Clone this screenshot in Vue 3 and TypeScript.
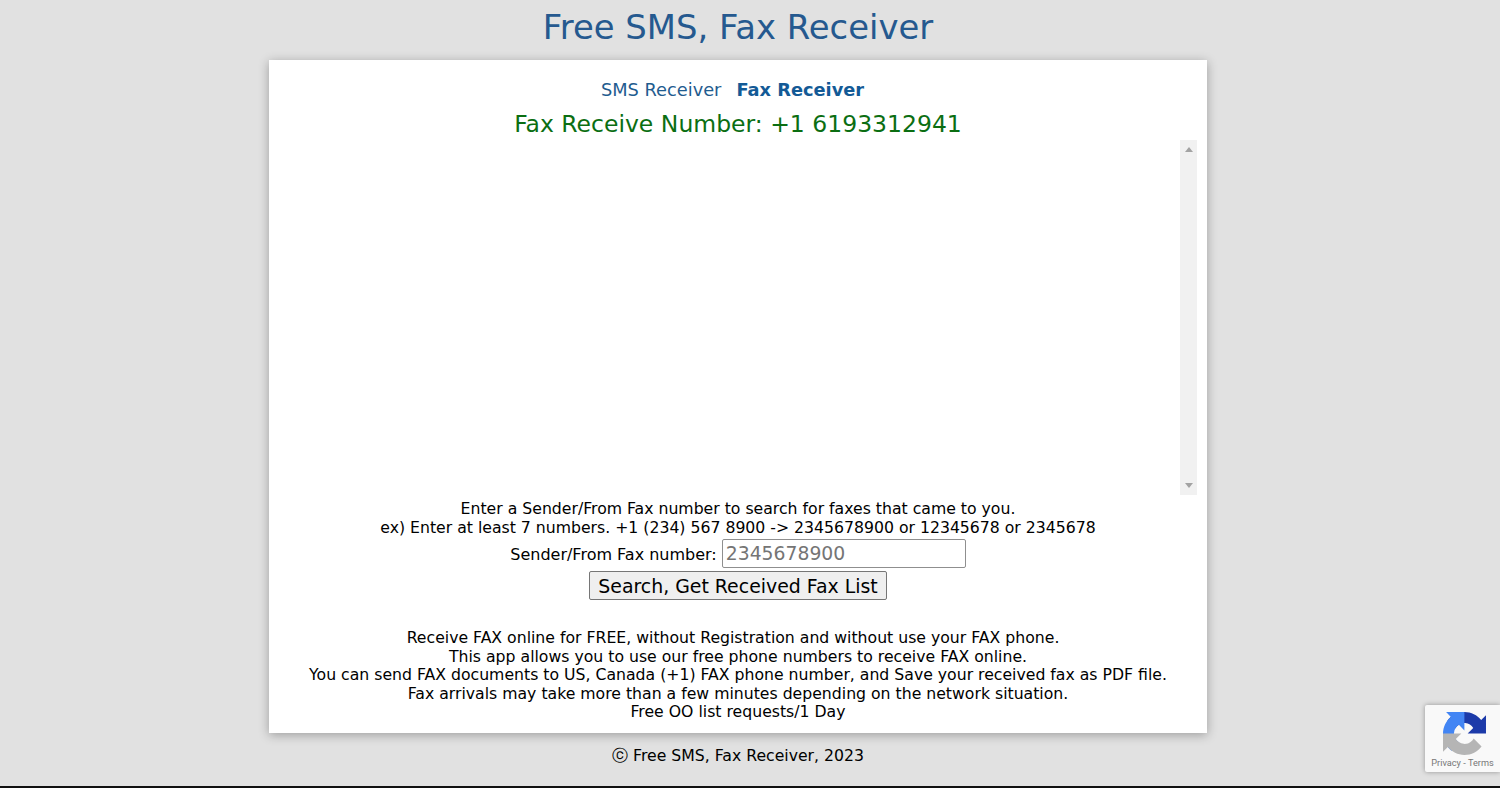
<script setup lang="ts">
const intro: string[] = [
  'Enter a Sender/From Fax number to search for faxes that came to you.',
  'ex) Enter at least 7 numbers. +1 (234) 567 8900 -> 2345678900 or 12345678 or 2345678',
]
const about: string[] = [
  'Receive FAX online for FREE, without Registration and without use your FAX phone.\u00a0\u00a0',
  'This app allows you to use our free phone numbers to receive FAX online.',
  'You can send FAX documents to US, Canada (+1) FAX phone number, and Save your received fax as PDF file.',
  'Fax arrivals may take more than a few minutes depending on the network situation.',
  'Free OO list requests/1 Day',
]
</script>

<template>
  <div class="page">
    <div class="column">
      <h1 class="title">Free SMS, Fax Receiver</h1>
      <main class="card">
        <nav class="tabs">
          <a class="tab">SMS Receiver</a>
          <a class="tab active">Fax Receiver</a>
        </nav>
        <h2 class="number">Fax Receive Number: +1 6193312941</h2>
        <div class="list">
          <div class="track">
            <span class="arrow up"></span>
            <span class="arrow down"></span>
          </div>
        </div>
        <div class="lines">
          <div v-for="line in intro" :key="line">{{ line }}</div>
        </div>
        <div class="field">
          <label class="label" for="from">Sender/From Fax number:</label>
          <input id="from" class="input" type="text" placeholder="2345678900" />
        </div>
        <button class="search" type="button">Search, Get Received Fax List</button>
        <div class="lines about">
          <div v-for="line in about" :key="line">{{ line }}</div>
        </div>
      </main>
      <footer class="footer">ⓒ Free SMS, Fax Receiver, 2023</footer>
    </div>
    <div class="badge">
      <svg class="logo" viewBox="0 0 64 64" width="43" height="43" aria-hidden="true">
        <path fill="#1c3aa9" d="M64 31.955l-.033-1.37V4.687l-7.16 7.16C50.948 4.674 42.033.093 32.05.093c-10.4 0-19.622 4.96-25.458 12.64l11.736 11.86a15.55 15.55 0 0 1 4.754-5.334c2.05-1.6 4.952-2.906 8.968-2.906.485 0 .86.057 1.135.163 4.976.393 9.288 3.14 11.828 7.124l-8.307 8.307L64 31.953" />
        <path fill="#4285f4" d="M31.862.094l-1.37.033H4.594l7.16 7.16C4.58 13.147 0 22.06 0 32.046c0 10.4 4.96 19.622 12.64 25.458l11.86-11.736a15.55 15.55 0 0 1-5.334-4.754c-1.6-2.05-2.906-4.952-2.906-8.968 0-.485.057-.86.163-1.135.393-4.976 3.14-9.288 7.124-11.828l8.307 8.307L31.86.095" />
        <path fill="#b5b5b5" d="M0 32l.033 1.37V59.270l7.160-7.160c5.860 7.173 14.774 11.754 24.760 11.754 10.394 0 19.620-4.960 25.456-12.640l-11.736-11.860a15.550 15.550 0 0 1-4.754 5.334c-2.050 1.600-4.952 2.906-8.968 2.906-.485 0-.860-.057-1.135-.163-4.976-.393-9.288-3.140-11.828-7.124l8.307-8.307L0 32" />
      </svg>
      <div class="legal">Privacy - Terms</div>
    </div>
    <div class="edge"></div>
  </div>
</template>

<style>
html, body {
  margin: 0;
  background: #e1e1e1;
}
</style>

<style scoped>
.page {
  height: 788px;
  overflow: hidden;
  background: #e1e1e1;
  font-family: "DejaVu Sans", sans-serif;
  font-size: 15.7px;
  line-height: 18.600px;
  color: #000;
  box-sizing: border-box;
  padding-right: 24px;
}
.column {
  display: flex;
  flex-direction: column;
  align-items: center;
}
.title {
  margin: 0;
  height: 60px;
  font-size: 33.850px;
  line-height: 55px;
  font-weight: 400;
  color: #25598f;
}
.card {
  box-sizing: border-box;
  width: 938px;
  height: 673px;
  padding: 20px 10px 0;
  background: #fff;
  box-shadow: 0 2px 10px rgba(0, 0, 0, 0.3);
  display: flex;
  flex-direction: column;
  align-items: center;
  text-align: center;
}
.tabs {
  display: flex;
  gap: 15px;
  padding-right: 11px;
  font-size: 17.800px;
  line-height: 20px;
  color: #1f5c8f;
}
.tab.active {
  font-weight: 700;
  color: #135a96;
}
.number {
  margin: 10px 0 0;
  font-size: 23.500px;
  line-height: 28px;
  font-weight: 400;
  color: #0b6e12;
}
.list {
  align-self: stretch;
  height: 355px;
  margin-top: 2px;
  display: flex;
  justify-content: flex-end;
}
.track {
  width: 17px;
  background: #f1f1f1;
  display: flex;
  flex-direction: column;
  justify-content: space-between;
  align-items: center;
  padding: 7px 0;
  box-sizing: border-box;
}
.arrow {
  width: 0;
  height: 0;
  border-left: 4px solid transparent;
  border-right: 4px solid transparent;
}
.arrow.up {
  border-bottom: 5px solid #a3a3a3;
}
.arrow.down {
  border-top: 5px solid #a3a3a3;
}
.lines {
  margin-top: 5px;
}
.field {
  display: flex;
  align-items: center;
  gap: 5px;
  margin-top: 1px;
  height: 30px;
}
.label {
  font-size: 16px;
  padding-top: 4px;
}
.input {
  box-sizing: border-box;
  width: 244px;
  height: 29px;
  padding: 1px 3px;
  border: 1px solid #8f8f8f;
  border-radius: 2px;
  font-family: inherit;
  font-size: 18.800px;
  color: #000;
  background: #fff;
  outline: none;
}
.input::placeholder {
  color: #757575;
  opacity: 1;
}
.search {
  box-sizing: border-box;
  height: 29px;
  width: 298px;
  margin-top: 3px;
  padding: 0;
  border: 1px solid #767676;
  border-radius: 2px;
  background: #efefef;
  font-family: inherit;
  font-size: 18.900px;
  color: #000;
}
.about {
  margin-top: 29px;
  line-height: 18.500px;
}
.footer {
  margin-top: 14px;
}
.badge {
  position: absolute;
  left: 1425px;
  top: 705px;
  width: 75px;
  height: 67px;
  background: #f9f9f9;
  box-shadow: 0 0 5px rgba(0, 0, 0, 0.35);
  border-radius: 2px 0 0 2px;
  font-family: Roboto, sans-serif;
}
.logo {
  position: absolute;
  left: 18px;
  top: 7px;
}
.legal {
  position: absolute;
  left: 0;
  right: 0;
  top: 52px;
  text-align: center;
  font-size: 9.200px;
  line-height: 12px;
  color: #777;
  white-space: nowrap;
}
.edge {
  position: absolute;
  left: 0;
  right: 0;
  top: 786px;
  height: 2px;
  background: #111;
}
</style>
